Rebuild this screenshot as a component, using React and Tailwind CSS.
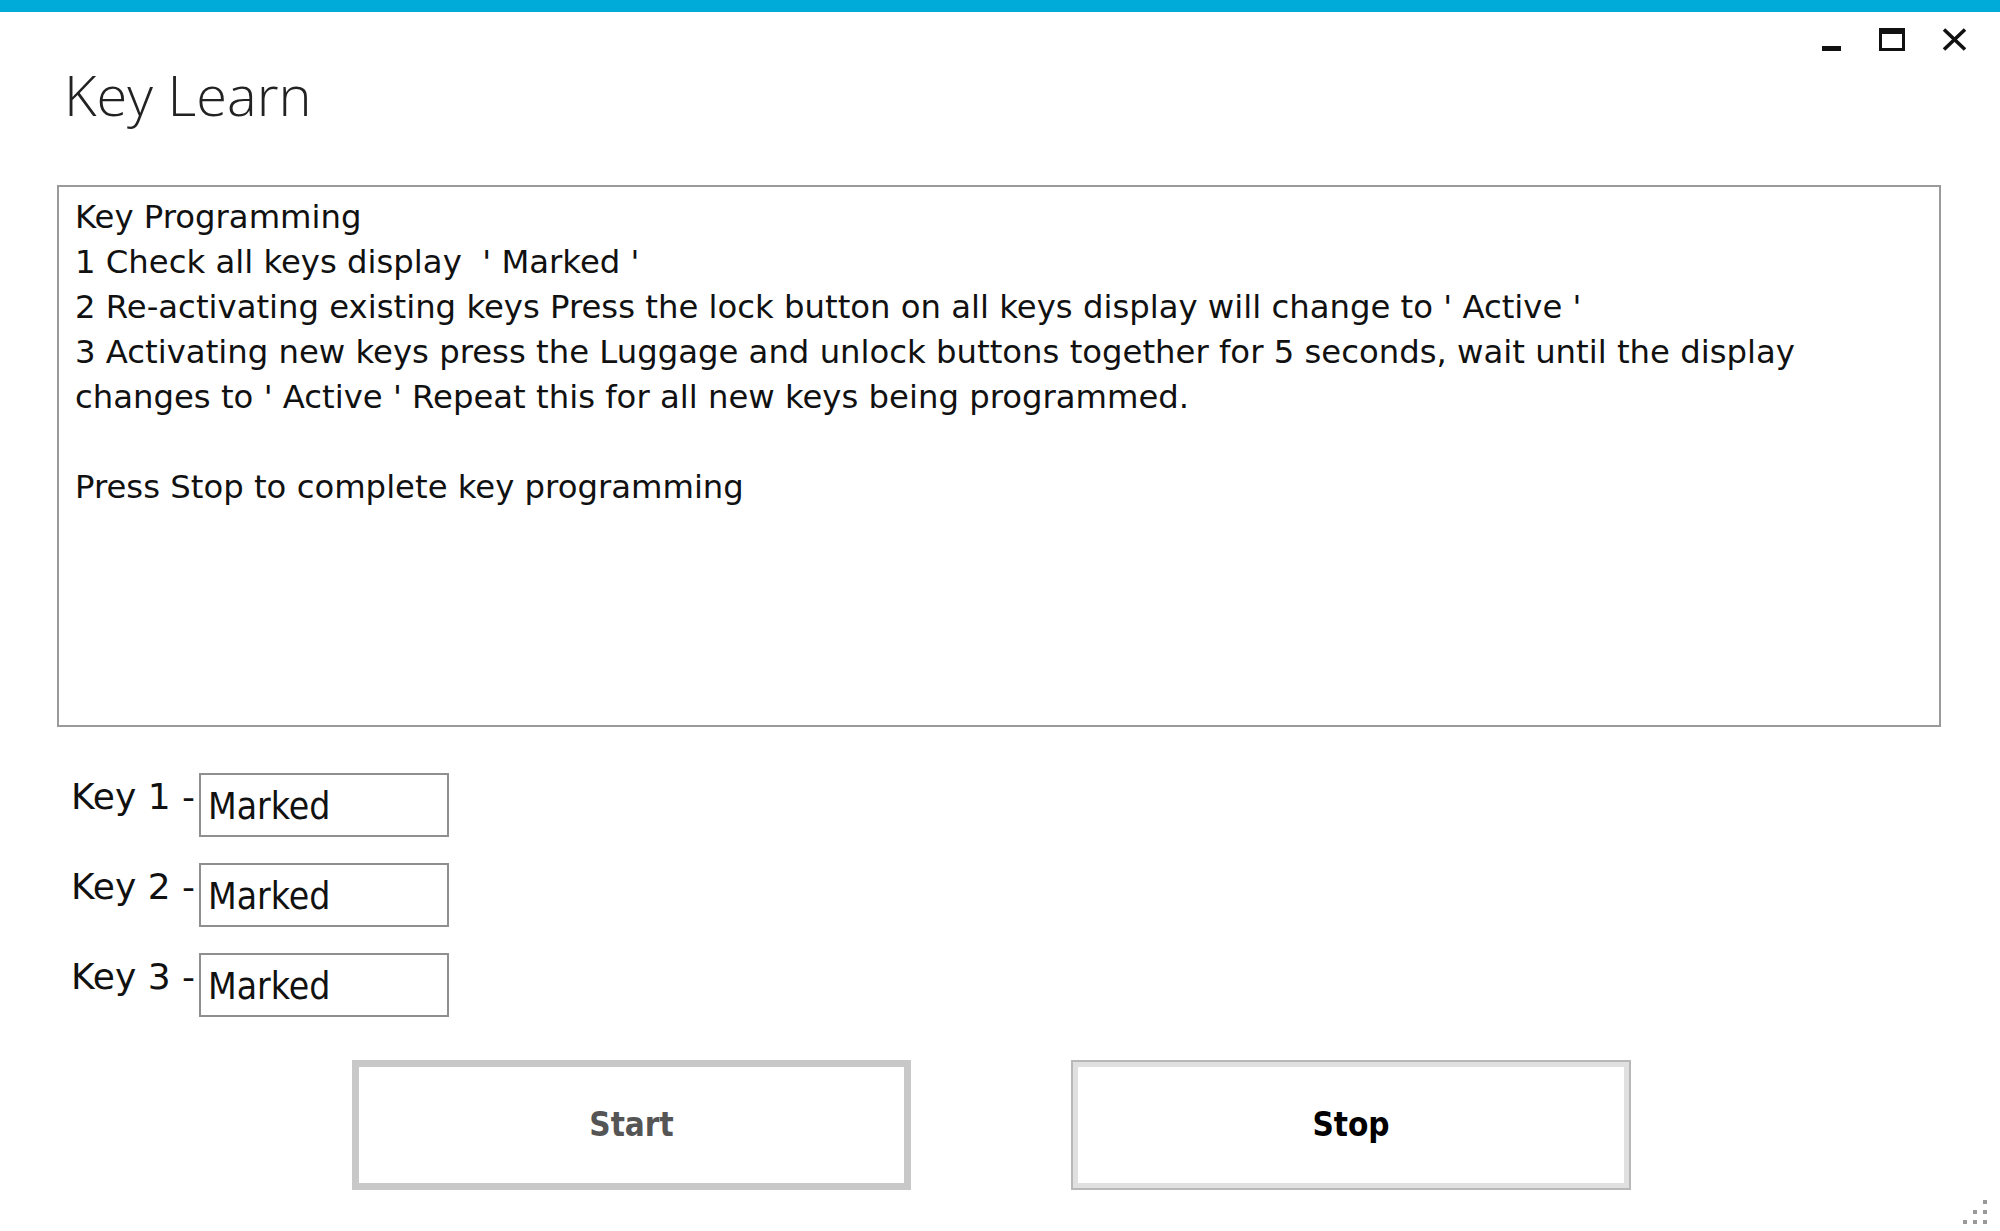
import React from "react";

const lines = [
  "Key Programming",
  "1 Check all keys display  ' Marked '",
  "2 Re-activating existing keys Press the lock button on all keys display will change to ' Active '",
  "3 Activating new keys press the Luggage and unlock buttons together for 5 seconds, wait until the display",
  "changes to ' Active ' Repeat this for all new keys being programmed.",
  "\u00a0",
  "Press Stop to complete key programming",
];

function KeyRow({ n }) {
  return (
    <div className="flex items-start">
      <div className="w-[142px] pl-[14px] pt-[2px] text-[36px] leading-[44px] text-[#111] whitespace-pre font-['DejaVu_Sans',sans-serif] font-stretch-normal">
        {`Key ${n} -`}
      </div>
      <div className="w-[250px] h-[64px] border-2 border-[#8f8f8f] bg-white pl-[7px] pt-[10px] text-[37px] leading-[44px] text-[#111]">
        Marked
      </div>
    </div>
  );
}

export default function App() {
  return (
    <div className="w-[2000px] h-[1231px] bg-white relative overflow-hidden font-['DejaVu_Sans_Condensed','DejaVu_Sans',sans-serif] font-stretch-condensed">
      <div className="h-[12px] bg-[#00abd9]" />
      <div className="flex justify-between items-start h-[173px]">
        <div className="pl-[64px] pt-[47px] font-['Open_Sans',sans-serif] font-light text-[56px] leading-[70px] text-[#222] font-stretch-normal">
          Key Learn
        </div>
        <div className="flex items-start gap-[37px] pr-[33px] pt-[16px]">
          <div className="w-[20px] h-[23px] flex items-end">
            <div className="w-[19px] h-[5px] bg-[#111]" />
          </div>
          <div className="w-[26px] h-[23px] border-[3px] border-t-[6px] border-[#111]" />
          <svg width="25" height="23" viewBox="0 0 25 23">
            <path d="M2 1.5 L23 21.5 M23 1.5 L2 21.5" stroke="#111" strokeWidth="3.6" />
          </svg>
        </div>
      </div>
      <div className="ml-[57px] w-[1884px] h-[542px] border-2 border-[#9a9a9a] pl-[16px] pt-[8px] text-[32.3px] leading-[45px] text-[#111] font-['DejaVu_Sans',sans-serif] font-stretch-normal">
        {lines.map((l, i) => (
          <div key={i} className="whitespace-pre">{l}</div>
        ))}
      </div>
      <div className="flex flex-col gap-[26px] ml-[57px] mt-[46px]">
        <KeyRow n={1} />
        <KeyRow n={2} />
        <KeyRow n={3} />
      </div>
      <div className="flex gap-[160px] ml-[352px] mt-[43px]">
        <div className="w-[559px] h-[130px] border-[7px] border-[#c8c8c8] bg-white flex items-center justify-center text-[33px] font-bold text-[#555]">
          Start
        </div>
        <div className="w-[560px] h-[130px] border-[2px] border-[#b8b8b8] bg-white p-0">
          <div className="w-full h-full border-[5px] border-[#e0e0e0] flex items-center justify-center text-[33px] font-bold text-[#000]">
            Stop
          </div>
        </div>
      </div>
      <div className="absolute right-[13px] bottom-[7px] grid grid-cols-3 gap-[6px]">
        <span className="w-[4px] h-[4px]" />
        <span className="w-[4px] h-[4px]" />
        <span className="w-[4px] h-[4px] bg-[#999]" />
        <span className="w-[4px] h-[4px]" />
        <span className="w-[4px] h-[4px] bg-[#999]" />
        <span className="w-[4px] h-[4px] bg-[#999]" />
        <span className="w-[4px] h-[4px] bg-[#999]" />
        <span className="w-[4px] h-[4px] bg-[#999]" />
        <span className="w-[4px] h-[4px] bg-[#999]" />
      </div>
    </div>
  );
}
